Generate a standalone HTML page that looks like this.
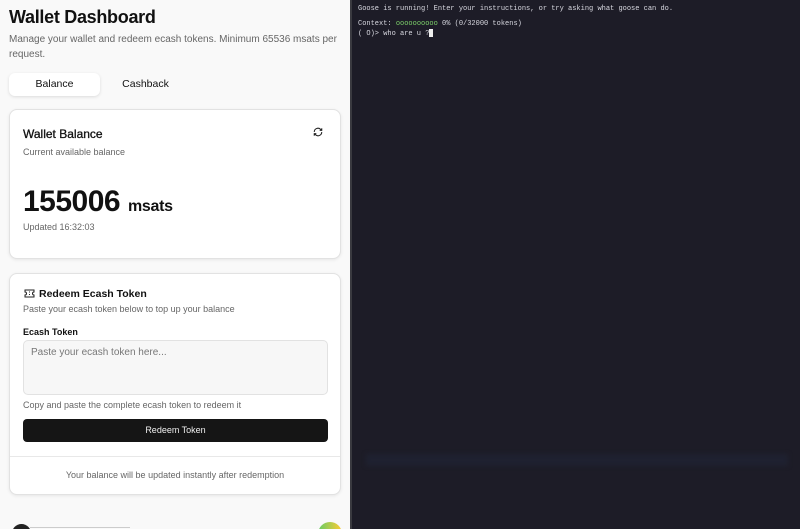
<!DOCTYPE html>
<html><head><meta charset="utf-8"><style>
*{margin:0;padding:0;box-sizing:border-box}
html,body{width:800px;height:529px;overflow:hidden}
body{font-family:"Liberation Sans",sans-serif;background:#fafafa;position:relative}
.left{position:absolute;left:0;top:0;width:350px;height:529px;background:#f9f9f9;color:#111;overflow:hidden}
.term{position:absolute;left:350px;top:0;width:450px;height:529px;background:#1d1c27;border-left:2px solid #3a3a40;font-family:"Liberation Mono",monospace;font-size:7px;color:#d8d8e0;padding:4px 0 0 6px;line-height:10px;overflow:hidden}
h1{position:absolute;left:9px;top:7px;font-size:18px;font-weight:bold;letter-spacing:-0.3px}
.sub{position:absolute;left:9px;top:32px;width:335px;font-size:10px;color:#666;line-height:15px}
.tab{position:absolute;top:73px;height:23px;font-size:10.5px;line-height:23px;text-align:center;width:91px}
.card{position:absolute;left:9px;width:332px;background:#fff;border:1px solid #e2e2e2;border-radius:8px;box-shadow:0 1px 3px rgba(0,0,0,.08)}
.t{position:absolute;font-size:11px;font-weight:bold}
.s{position:absolute;font-size:9px;color:#666}
</style></head><body>
<div class="left">
<h1>Wallet Dashboard</h1>
<div class="sub">Manage your wallet and redeem ecash tokens. Minimum 65536 msats per request.</div>
<div class="tab" style="left:9px;background:#fff;border-radius:6px;box-shadow:0 1px 3px rgba(0,0,0,.12)">Balance</div>
<div class="tab" style="left:100px">Cashback</div>
<div class="card" style="top:109px;height:150px">
<div class="t" style="left:13px;top:17px;font-size:12px;font-weight:normal;color:#111;-webkit-text-stroke:0.3px #111">Wallet Balance</div>
<svg style="position:absolute;left:303px;top:17px" width="10" height="10" viewBox="0 0 24 24" fill="none" stroke="#222" stroke-width="2.5"><path d="M3 12a9 9 0 0 1 15-6.7L21 8M21 3v5h-5M21 12a9 9 0 0 1-15 6.7L3 16M3 21v-5h5"/></svg>
<div class="s" style="left:13px;top:37px">Current available balance</div>
<div style="position:absolute;left:13px;top:75px;font-size:30px;font-weight:bold;letter-spacing:-0.5px">155006 <span style="font-size:16px;letter-spacing:-0.3px">msats</span></div>
<div class="s" style="left:13px;top:112px">Updated 16:32:03</div>
</div>
<div class="card" style="top:273px;height:222px">
<svg style="position:absolute;left:14px;top:15px" width="11" height="9" viewBox="0 0 22 18" fill="none" stroke="#222" stroke-width="2"><path d="M2 2h18v4a3 3 0 0 0 0 6v4H2v-4a3 3 0 0 0 0-6z M11 5v2M11 10v2"/></svg>
<div class="t" style="left:29px;top:14px;font-size:10.5px">Redeem Ecash Token</div>
<div class="s" style="left:13px;top:30px">Paste your ecash token below to top up your balance</div>
<div class="t" style="left:13px;top:53px;font-size:9px">Ecash Token</div>
<div style="position:absolute;left:13px;top:66px;width:305px;height:55px;background:#f7f7f7;border:1px solid #e2e2e2;border-radius:5px;font-size:10px;color:#777;padding:6px 7px">Paste your ecash token here...</div>
<div class="s" style="left:13px;top:126px">Copy and paste the complete ecash token to redeem it</div>
<div style="position:absolute;left:13px;top:145px;width:305px;height:23px;background:#151515;border-radius:4px;color:#eee;font-size:9px;text-align:center;line-height:23px">Redeem Token</div>
<div style="position:absolute;left:0;top:182px;width:330px;border-top:1px solid #e8e8e8"></div>
<div class="s" style="left:0;width:330px;text-align:center;top:196px">Your balance will be updated instantly after redemption</div>
</div>
<div style="position:absolute;left:12px;top:524px;width:19px;height:19px;border-radius:50%;background:#222"></div>
<div style="position:absolute;left:30px;top:527px;width:100px;border-top:1px solid #ccc"></div>
<div style="position:absolute;left:318px;top:522px;width:24px;height:24px;border-radius:50%;background:linear-gradient(90deg,#6c6,#fc3)"></div>
</div>
<div class="term">
<div>Goose is running! Enter your instructions, or try asking what goose can do.</div>
<div style="height:5px"></div>
<div>Context: <span style="color:#7ccf6a">oooooooooo</span> 0% (0/32000 tokens)</div>
<div>( O)&gt; who are u ?<span style="background:#eee;display:inline-block;width:4px;height:8px;vertical-align:middle"></span></div>
<div style="position:absolute;left:14px;top:454px;width:422px;height:12px;background:#1f2130;filter:blur(2px)"></div>
</div>
</body></html>
